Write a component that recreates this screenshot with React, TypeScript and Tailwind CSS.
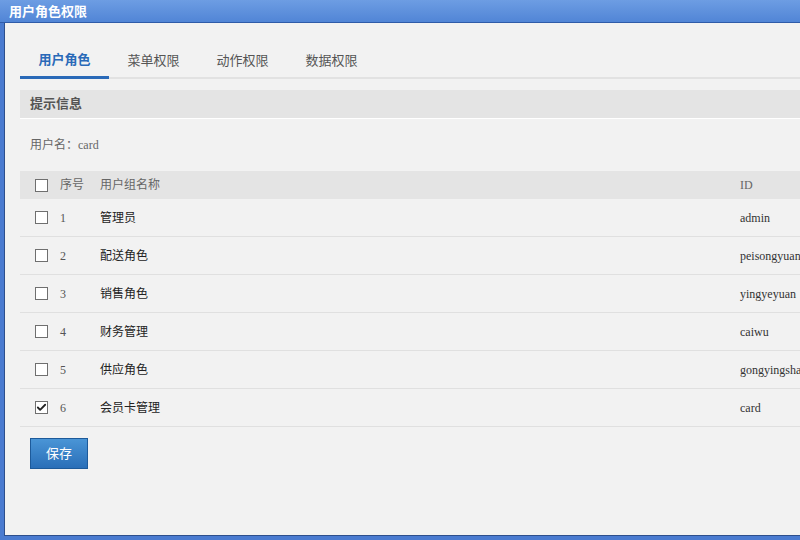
import { Check } from 'lucide-react';

const roles = [
  { no: 1, name: '管理员', id: 'admin', checked: false },
  { no: 2, name: '配送角色', id: 'peisongyuan', checked: false },
  { no: 3, name: '销售角色', id: 'yingyeyuan', checked: false },
  { no: 4, name: '财务管理', id: 'caiwu', checked: false },
  { no: 5, name: '供应角色', id: 'gongyingshang', checked: false },
  { no: 6, name: '会员卡管理', id: 'card', checked: true },
];

const tabs = ['用户角色', '菜单权限', '动作权限', '数据权限'];

function Box({ checked }: { checked?: boolean }) {
  return (
    <span className="flex h-[13px] w-[13px] items-center justify-center border border-[#6f6f6f] bg-white">
      {checked && <Check className="h-[11px] w-[11px] text-[#222]" strokeWidth={4} />}
    </span>
  );
}

export default function App() {
  return (
    <div
      className="flex h-[540px] w-[800px] flex-col overflow-hidden bg-[#4a7bd0]"
      style={{ fontFamily: '"Liberation Serif", "Noto Sans CJK SC", serif' }}
    >
      {/* Title bar */}
      <div className="flex h-[23px] shrink-0 items-center border-b border-[#2f5ba8] bg-gradient-to-b from-[#6d9de3] to-[#5185d6] px-[9px]">
        <span className="text-[13px] font-bold text-white" style={{ fontFamily: '"Noto Sans CJK SC", sans-serif' }}>
          用户角色权限
        </span>
      </div>

      <div className="flex min-h-0 flex-1 pl-[4px] pb-[4px]">
        <div className="flex-1 overflow-hidden border-l border-b border-[#2d4f8c] bg-[#f2f2f2] pl-[15px] pt-[20px]">
          {/* Tabs */}
          <div className="flex border-b-2 border-[#e2e2e2]">
            {tabs.map((t, i) => (
              <div
                key={t}
                className={`-mb-[2px] flex h-[36px] w-[89px] items-center justify-center text-[13px] ${
                  i === 0 ? 'border-b-[3px] border-[#2a6ab8] font-bold text-[#2a6ab8]' : 'text-[#555]'
                }`}
              >
                {t}
              </div>
            ))}
          </div>

          {/* Section header */}
          <div className="mt-[11px] flex h-[29px] items-center border-b border-white bg-[#e4e4e4] pl-[10px] text-[13px] font-bold text-[#555]">
            提示信息
          </div>

          <div className="flex h-[52px] items-center pl-[10px] text-[12px] text-[#666]">用户名：card</div>

          {/* Table */}
          <div className="w-[800px] text-[12px]">
            <div className="flex h-[28px] items-center bg-[#e4e4e4] text-[#666]">
              <div className="flex w-[40px] justify-center pl-[2px]">
                <Box />
              </div>
              <div className="w-[40px]">序号</div>
              <div className="w-[640px]">用户组名称</div>
              <div>ID</div>
            </div>
            {roles.map((r) => (
              <div key={r.no} className="flex h-[38px] items-center border-b border-[#e0e0e0] text-[#333]">
                <div className="flex w-[40px] justify-center pl-[2px]">
                  <Box checked={r.checked} />
                </div>
                <div className="w-[40px] text-[#555]">{r.no}</div>
                <div className="w-[640px] text-[#222]">{r.name}</div>
                <div className="whitespace-nowrap text-[#333]">{r.id}</div>
              </div>
            ))}
          </div>

          <div className="pl-[10px] pt-[11px]">
            <button className="h-[31px] w-[58px] border border-[#1d5a9a] bg-gradient-to-b from-[#4a95d6] to-[#2a6fb8] text-[13px] text-white">
              保存
            </button>
          </div>
        </div>
      </div>
    </div>
  );
}
